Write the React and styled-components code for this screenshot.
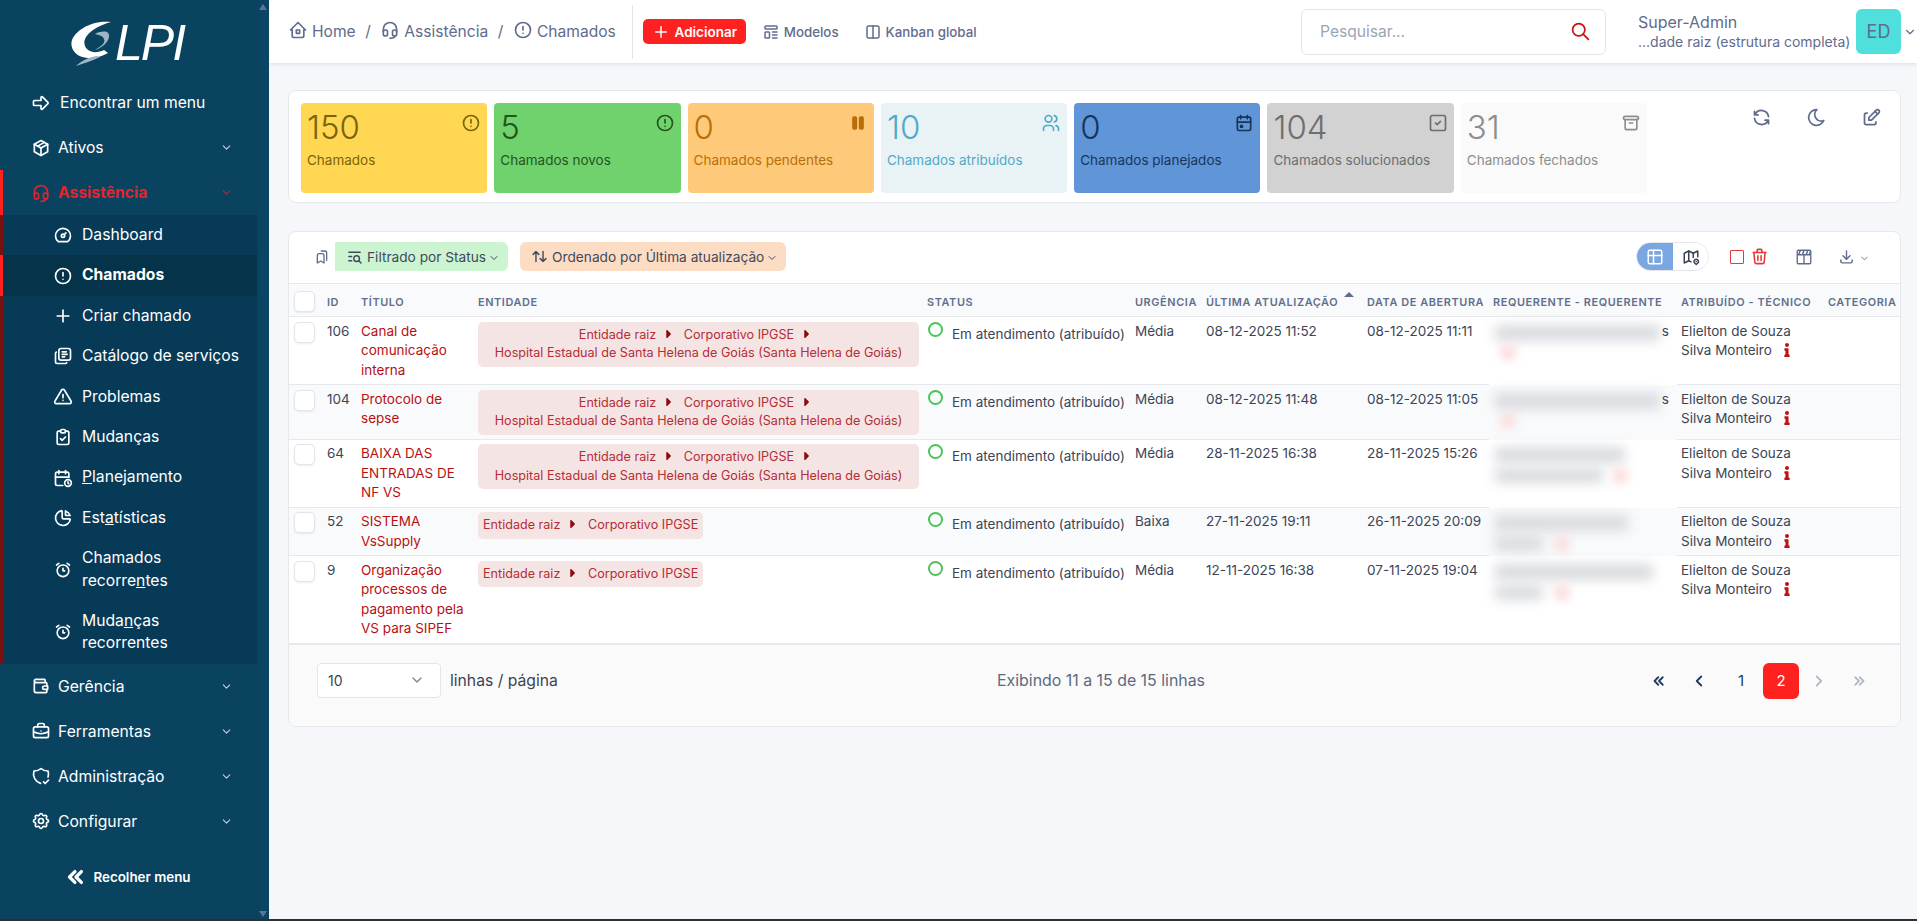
import React from "react"
import styled, { createGlobalStyle } from "styled-components"
import {
  TbAlarm, TbAlertCircle, TbAlertTriangle, TbArchive, TbArrowBigRight, TbArrowsSort, TbBookmarks, TbBriefcase,
  TbCalendarEvent, TbCalendarTime, TbChartPie, TbChevronDown, TbChevronLeft, TbChevronRight, TbChevronsLeft,
  TbChevronsRight, TbClipboardCheck, TbDashboard, TbDownload, TbEdit, TbHeadset, TbHome2, TbLayoutColumns,
  TbLibrary, TbListSearch, TbMap2, TbMoon, TbPackage, TbPlayerPauseFilled, TbPlus, TbRefresh, TbSearch,
  TbSettings, TbShieldCheck, TbSquareCheck, TbTable, TbTemplate, TbTrash, TbUsers, TbWallet,
  TbCaretRightFilled,
} from "react-icons/tb"
import { FaInfo } from "react-icons/fa"

const GlobalStyle = createGlobalStyle`
  html, body { margin: 0; padding: 0; height: 100%; overflow: hidden; }
  body { font-family: Inter, "Liberation Sans", sans-serif; font-size: 14px; color: #3a4356; background: #f5f7fb; }
  * { box-sizing: border-box; }
`

const Page = styled.div`
  display: flex;
  height: 919px;
`
const Sidebar = styled.aside`
  width: 269px;
  flex-shrink: 0;
  height: 919px;
  background: #0a4360;
  color: #fff;
  display: flex;
`
const SideInner = styled.div`
  width: 259px;
  display: flex;
  flex-direction: column;
`
const ScrollTrack = styled.div`
  width: 10px;
  background: #0b4565;
  position: relative;
  &::before, &::after {
    content: "";
    position: absolute;
    left: 0;
    border-left: 4px solid transparent;
    border-right: 4px solid transparent;
  }
  &::before { top: 4px; border-bottom: 6px solid #5b7693; }
  &::after { bottom: 2px; border-top: 6px solid #5b7693; }
`
const LogoWrap = styled.div`
  height: 80px;
  padding: 21px 0 0 71px;
`
const LogoBox = styled.div`
  display: flex;
  align-items: flex-start;
`
const LogoText = styled.span`
  font-family: "Liberation Sans", sans-serif;
  font-style: italic;
  font-size: 50px;
  line-height: 44px;
  letter-spacing: -2px;
  color: #fff;
  margin-left: -6px;
`
const NavItem = styled.div`
  height: 45px;
  display: flex;
  align-items: center;
  padding-left: ${p => (p.$active ? 28 : 31)}px;
  font-size: 15.7px;
  color: ${p => (p.$active ? "#e3232e" : "#fff")};
  font-weight: ${p => (p.$active ? 700 : 400)};
  border-left: ${p => (p.$active ? "3px solid #ff2020" : "0")};
  svg.main { font-size: 20px; flex-shrink: 0; margin-right: ${p => p.$gap || 7}px; }
`
const NavChevron = styled(TbChevronDown)`
  margin-left: auto;
  margin-right: 26px;
  font-size: 13px;
  opacity: .75;
`
const SubNav = styled.div`
  width: 257px;
  background: #063a57;
  border-left: 3px solid #7a1012;
`
const SubItem = styled.div`
  display: flex;
  align-items: center;
  padding: 9px 10px 9px 50px;
  line-height: 22.4px;
  font-size: 15.7px;
  margin-left: -3px;
  border-left: 3px solid ${p => (p.$active ? "#ff2020" : "transparent")};
  background: ${p => (p.$active ? "#053349" : "transparent")};
  font-weight: ${p => (p.$active ? 700 : 400)};
  svg { font-size: 20px; flex-shrink: 0; margin-right: 9px; }
`
const Collapse = styled.div`
  margin-top: auto;
  margin-bottom: 29px;
  padding-right: 5px;
  display: flex;
  align-items: center;
  justify-content: center;
  font-size: 13.4px;
  font-weight: 600;
  svg { font-size: 26px; margin-right: 4px; stroke-width: 3; }
`

const Main = styled.main`
  flex: 1;
  min-width: 0;
  display: flex;
  flex-direction: column;
`
const TopBar = styled.header`
  height: 63px;
  background: #fff;
  box-shadow: 0 1px 4px rgba(30, 40, 70, .12);
  display: flex;
  align-items: center;
  padding-left: 19px;
  color: #5f6c8c;
`
const Crumbs = styled.nav`
  display: flex;
  align-items: center;
  font-size: 15.6px;
  height: 54px;
  padding-right: 16px;
  border-right: 1px solid #e3e5ea;
`
const Crumb = styled.span`
  display: inline-flex;
  align-items: center;
  gap: 4px;
  svg { font-size: 20px; margin-top: -4px; }
`
const Slash = styled.span`
  margin: 0 9.5px;
`
const AddButton = styled.button`
  margin-left: 10px;
  height: 25px;
  width: 103px;
  border: 0;
  border-radius: 5px;
  background: #ff2020;
  color: #fff;
  font: 600 13.5px Inter, sans-serif;
  display: inline-flex;
  align-items: center;
  justify-content: center;
  gap: 5px;
  svg { font-size: 18px; }
`
const BarLink = styled.span`
  display: inline-flex;
  align-items: center;
  gap: 4px;
  margin-left: ${p => p.$ml}px;
  font-size: 13.3px;
  font-weight: 500;
  svg { font-size: 18px; }
`
const SearchBox = styled.div`
  margin-left: auto;
  width: 305px;
  height: 46px;
  border: 1px solid #e3e5ea;
  border-radius: 6px;
  display: flex;
  align-items: center;
  justify-content: space-between;
  padding: 0 14px 0 18px;
  font-size: 15.6px;
  color: #9aa5b8;
  svg { font-size: 21px; color: #c81414; }
`
const UserInfo = styled.div`
  margin-left: 32px;
  width: 218px;
  display: flex;
  flex-direction: column;
  gap: 1px;
`
const UserName = styled.span`
  font-size: 16px;
  line-height: 20px;
`
const UserEntity = styled.span`
  font-size: 14px;
  line-height: 18px;
  white-space: nowrap;
`
const Avatar = styled.div`
  width: 45px;
  height: 45px;
  border-radius: 6px;
  background: #4fdfdc;
  display: flex;
  align-items: center;
  justify-content: center;
  font-size: 18px;
`
const AvatarChevron = styled(TbChevronDown)`
  font-size: 14px;
  margin-left: 2px;
`

const Content = styled.div`
  padding: 27px 16px 0 19px;
  display: flex;
  flex-direction: column;
  gap: 28px;
`
const Card = styled.section`
  background: #fff;
  border: 1px solid #e6e8ec;
  border-radius: 8px;
`
const StatsCard = styled(Card)`
  height: 113px;
  padding: 12px;
  display: flex;
  justify-content: space-between;
`
const Tiles = styled.div`
  display: flex;
  gap: 7px;
`
const Tile = styled.div`
  width: 186.3px;
  height: 90px;
  border-radius: 4px;
  padding: 4px 6px 0;
  background: ${p => p.$bg};
  color: ${p => p.$fg};
`
const TileTop = styled.div`
  display: flex;
  justify-content: space-between;
  svg { font-size: 20px; margin-top: 6px; }
`
const TileNumber = styled.div`
  font-size: 33px;
  line-height: 40px;
  font-weight: 300;
`
const TileLabel = styled.div`
  margin-top: 3px;
  font-size: 13.5px;
  line-height: 20px;
`
const Tools = styled.div`
  display: flex;
  gap: 34px;
  padding: 4px 6px 0 0;
  color: #5f6c8c;
  svg { font-size: 21px; display: block; }
`

const TableCard = styled(Card)`
  height: 496px;
  display: flex;
  flex-direction: column;
  overflow: hidden;
`
const Toolbar = styled.div`
  height: 51px;
  flex-shrink: 0;
  display: flex;
  align-items: center;
  padding: 0 30px 2px 25px;
  color: #5f6c8c;
`
const BookmarkIcon = styled(TbBookmarks)`
  font-size: 16px;
  margin-right: 5px;
`
const Chip = styled.span`
  height: 29px;
  display: inline-flex;
  align-items: center;
  gap: 4px;
  padding: 0 8px 0 11px;
  background: ${p => p.$bg};
  border-radius: ${p => p.$radius};
  margin-right: 12px;
  color: #3f4a5c;
  font-size: 13.7px;
  svg { font-size: 17px; }
  svg.small { font-size: 12px; margin-left: -2px; margin-top: 2px; }
`
const ToolbarRight = styled.div`
  margin-left: auto;
  display: flex;
  align-items: center;
`
const ViewToggle = styled.div`
  display: flex;
  width: 73px;
  height: 29px;
  border: 1px solid #e3e5ea;
  border-radius: 15px;
  overflow: hidden;
`
const ViewButton = styled.span`
  flex: ${p => (p.$on ? "0 0 36px" : 1)};
  display: flex;
  align-items: center;
  justify-content: center;
  background: ${p => (p.$on ? "#7aa7e0" : "#fff")};
  color: ${p => (p.$on ? "#fff" : "#3a4356")};
  svg { font-size: 18px; }
`
const DeleteGroup = styled.div`
  display: flex;
  align-items: center;
  gap: 6px;
  margin-left: 21px;
  color: #e23a3a;
  svg { font-size: 19px; }
`
const RedSquare = styled.span`
  width: 14px;
  height: 14px;
  border: 1.5px solid #e23a3a;
  border-radius: 1px;
`
const ColumnsIcon = styled.svg`
  width: 18px;
  height: 18px;
  margin-left: 26px;
  fill: none;
  stroke: currentColor;
  stroke-width: 1.8;
`
const ExportMenu = styled.span`
  display: inline-flex;
  align-items: center;
  gap: 4px;
  margin-left: 25px;
  svg { font-size: 17px; }
  svg + svg { font-size: 11px; margin-top: 3px; }
`

const Table = styled.table`
  width: 100%;
  border-collapse: separate;
  border-spacing: 0;
  table-layout: fixed;
  flex-shrink: 0;
`
const Th = styled.th`
  width: ${p => p.$w}px;
  height: 34px;
  padding: 3px 4px 0;
  text-align: left;
  text-transform: uppercase;
  font-size: 10.9px;
  font-weight: 600;
  letter-spacing: .6px;
  color: #626f8c;
  white-space: nowrap;
  background: #f8fafc;
  border-top: 1px solid #e6e8ec;
  border-bottom: 1px solid #e6e8ec;
  position: relative;
`
const SortMark = styled.span`
  position: absolute;
  top: 8px;
  right: 9px;
  border-left: 5px solid transparent;
  border-right: 5px solid transparent;
  border-bottom: 5px solid #5f6c8c;
`
const Tr = styled.tr`
  background: ${p => (p.$alt ? "#f8fafc" : "#fff")};
`
const Td = styled.td`
  padding: 4.5px 4px 4px;
  vertical-align: top;
  line-height: 19.5px;
  font-size: 13.5px;
  border-bottom: ${p => (p.$last ? "2px" : "1px")} solid #e6e8ec;
  color: #3c4456;
  white-space: ${p => (p.$nowrap ? "nowrap" : "normal")};
`
const BlurCell = styled(Td)`
  position: relative;
  padding-left: 6px;
  border-bottom-color: ${p => (p.$last ? "#e6e8ec" : "transparent")};
`
const Check = styled.span`
  display: block;
  width: 21px;
  height: 21px;
  border: 1px solid #e3e5ea;
  border-radius: 5px;
  background: #fff;
  box-shadow: 0 1px 2px rgba(30, 40, 70, .08);
  margin-left: 1px;
`
const TicketLink = styled.span`
  color: #b81010;
`
const Entity = styled.span`
  display: ${p => (p.$wide ? "block" : "inline-block")};
  text-align: center;
  background: #f5e4e4;
  border-radius: 5px;
  padding: 4px 5px;
  font-size: 12.6px;
  line-height: 18.5px;
  color: #b52d35;
`
const Crumbname = styled.span`
  white-space: nowrap;
`
const Caret = styled(TbCaretRightFilled)`
  color: #8d0b0b;
  font-size: 14px;
  margin: 0 5px;
  vertical-align: -2px;
`
const StatusDot = styled.span`
  display: inline-block;
  width: 15px;
  height: 15px;
  border: 2px solid #4fc25a;
  border-radius: 50%;
  margin: 0 9px 0 1px;
  vertical-align: 2px;
`
const BlurLine = styled.div`
  height: ${p => p.$h || 16}px;
  width: ${p => p.$w}px;
  margin-top: ${p => p.$mt || 0}px;
  background: #d9dbdf;
  filter: blur(6px);
`
const BlurRed = styled.div`
  width: 14px;
  height: 15px;
  margin: ${p => p.$m};
  background: #fbdcdc;
  filter: blur(5px);
`
const CutLetter = styled.span`
  position: absolute;
  top: 5px;
  right: 8px;
`
const InfoIcon = styled(FaInfo)`
  color: #c01010;
  font-size: 14px;
  margin-left: 8px;
  vertical-align: -2px;
`

const Footer = styled.div`
  flex: 1;
  background: #fafafb;
  display: flex;
  align-items: flex-start;
  padding: 18px 21px 0 28px;
  position: relative;
`
const PageSize = styled.div`
  width: 124px;
  height: 35px;
  background: #fff;
  border: 1px solid #e3e5ea;
  border-radius: 4px;
  display: flex;
  align-items: center;
  justify-content: space-between;
  padding: 0 15px 0 10px;
  svg { font-size: 16px; color: #7a8499; }
`
const PageSizeLabel = styled.span`
  margin-left: 9px;
  line-height: 35px;
  font-size: 15.7px;
`
const ShowingText = styled.span`
  position: absolute;
  left: 708px;
  top: 18px;
  line-height: 35px;
  font-size: 15.9px;
  color: #5d6a80;
`
const Pager = styled.div`
  margin-left: auto;
  display: flex;
  align-items: center;
`
const PageBtn = styled.span`
  width: ${p => p.$w || 40}px;
  height: 36px;
  display: flex;
  align-items: center;
  justify-content: center;
  border-radius: 6px;
  font-size: 15px;
  background: ${p => (p.$on ? "#ff2020" : "transparent")};
  color: ${p => (p.$on ? "#fff" : p.$off ? "#b3bac6" : "#1f3a5c")};
  svg { font-size: 18px; stroke-width: 2.4; }
`
const BottomLine = styled.div`
  height: 2px;
  background: #2c3033;
`

const menuSub = [
  { icon: TbDashboard, label: "Dashboard" },
  { icon: TbAlertCircle, label: "Chamados", active: true },
  { icon: TbPlus, label: "Criar chamado" },
  { icon: TbLibrary, label: "Catálogo de serviços" },
  { icon: TbAlertTriangle, label: "Problemas" },
  { icon: TbClipboardCheck, label: "Mudanças" },
  { icon: TbCalendarTime, label: <><u>P</u>lanejamento</> },
  { icon: TbChartPie, label: <>Est<u>a</u>tísticas</> },
  { icon: TbAlarm, label: <>Chamados<br />recorre<u>n</u>tes</> },
  { icon: TbAlarm, label: <>Muda<u>n</u>ças<br />recorrentes</> },
]
const menuBottom = [
  { icon: TbWallet, label: "Gerência" },
  { icon: TbBriefcase, label: "Ferramentas" },
  { icon: TbShieldCheck, label: "Administração" },
  { icon: TbSettings, label: "Configurar" },
]

const tiles = [
  { n: 150, label: "Chamados", icon: TbAlertCircle, bg: "#ffd753", fg: "#7a6408" },
  { n: 5, label: "Chamados novos", icon: TbAlertCircle, bg: "#6fd26d", fg: "#26541f" },
  { n: 0, label: "Chamados pendentes", icon: TbPlayerPauseFilled, bg: "#ffc97a", fg: "#b96f08" },
  { n: 10, label: "Chamados atribuídos", icon: TbUsers, bg: "#e9f3f6", fg: "#52a9c7" },
  { n: 0, label: "Chamados planejados", icon: TbCalendarEvent, bg: "#6095d8", fg: "#17355c" },
  { n: 104, label: "Chamados solucionados", icon: TbSquareCheck, bg: "#d2d2d2", fg: "#6e6e6e" },
  { n: 31, label: "Chamados fechados", icon: TbArchive, bg: "#fafafa", fg: "#8d8d8d" },
]

const columns = [
  ["", 34], ["ID", 34], ["Título", 117], ["Entidade", 449], ["Status", 208], ["Urgência", 71],
  ["Última atualização", 161], ["Data de abertura", 126], ["Requerente - Requerente", 188],
  ["Atribuído - Técnico", 147], ["Categoria", 76],
]

const tickets = [
  { id: 106, title: "Canal de comunicação interna", wide: true, urg: "Média", upd: "08-12-2025 11:52", open: "08-12-2025 11:11", blur: [165, 0], red: "4px 0 0 6px", cut: true },
  { id: 104, title: "Protocolo de sepse", wide: true, urg: "Média", upd: "08-12-2025 11:48", open: "08-12-2025 11:05", blur: [165, 0], red: "4px 0 0 6px", cut: true },
  { id: 64, title: "BAIXA DAS ENTRADAS DE NF VS", wide: true, urg: "Média", upd: "28-11-2025 16:38", open: "28-11-2025 15:26", blur: [130, 108], red: "-15px 0 0 118px" },
  { id: 52, title: "SISTEMA VsSupply", urg: "Baixa", upd: "27-11-2025 19:11", open: "26-11-2025 20:09", blur: [133, 48], red: "-15px 0 0 60px" },
  { id: 9, title: "Organização processos de pagamento pela VS para SIPEF", urg: "Média", upd: "12-11-2025 16:38", open: "07-11-2025 19:04", blur: [158, 48], red: "-15px 0 0 60px" },
]

function Logo() {
  return (
    <LogoBox>
      <svg width="50" height="50" viewBox="0 0 50 50">
        <path d="M40 1C24 -1 6 7 1 19c-3 9 5 18 16 18 8 0 15-2 20-5l-4-3c-6 3-13 3-17-1C10 22 13 9 40 1z" fill="#fff" />
        <path d="M24 13c8-4 15-3 14 3-1 7-10 12-14 13 5-3 11-7 9-11-1-3-5-4-9-5z" fill="#9fb4c4" />
        <path d="M26 35C18 36 10 40 5 45c8-3 16-5 24-9z" fill="#9fb4c4" />
      </svg>
      <LogoText>LPI</LogoText>
    </LogoBox>
  )
}

function ColumnsGlyph() {
  return (
    <ColumnsIcon viewBox="0 0 24 24">
      <rect x="3" y="3" width="18" height="18" rx="1.5" />
      <path d="M3 9h18M12 9v12M7 3.5 5 8.5M12 3.5l-2 5M17 3.5l-2 5M21 4l-2 4.5" />
    </ColumnsIcon>
  )
}

function Row({ t, alt, last }) {
  return (
    <Tr $alt={alt}>
      <Td $last={last}><Check /></Td>
      <Td $last={last}>{t.id}</Td>
      <Td $last={last}><TicketLink>{t.title}</TicketLink></Td>
      <Td $last={last}>
        <Entity $wide={t.wide}>
          <Crumbname>Entidade raiz<Caret /></Crumbname> <Crumbname>Corporativo IPGSE{t.wide && <Caret />}</Crumbname>
          {t.wide && <> <Crumbname>Hospital Estadual de Santa Helena de Goiás (Santa Helena de Goiás)</Crumbname></>}
        </Entity>
      </Td>
      <Td $last={last} $nowrap><StatusDot />Em atendimento (atribuído)</Td>
      <Td $last={last}>{t.urg}</Td>
      <Td $last={last} $nowrap>{t.upd}</Td>
      <Td $last={last} $nowrap>{t.open}</Td>
      <BlurCell $last={last}>
        <BlurLine $w={t.blur[0]} $mt={3} />
        {t.blur[1] > 0 && <BlurLine $w={t.blur[1]} $mt={5} $h={15} />}
        <BlurRed $m={t.red} />
        {t.cut && <CutLetter>s</CutLetter>}
      </BlurCell>
      <Td $last={last}>Elielton de Souza<br />Silva Monteiro<InfoIcon /></Td>
      <Td $last={last} />
    </Tr>
  )
}

export default function App() {
  return (
    <>
      <GlobalStyle />
      <Page>
        <Sidebar>
          <SideInner>
            <LogoWrap><Logo /></LogoWrap>
            <NavItem $gap={9}><TbArrowBigRight className="main" />Encontrar um menu</NavItem>
            <NavItem><TbPackage className="main" />Ativos<NavChevron /></NavItem>
            <NavItem $active><TbHeadset className="main" />Assistência<NavChevron /></NavItem>
            <SubNav>
              {menuSub.map((m, i) => (
                <SubItem key={i} $active={m.active}><m.icon /><span>{m.label}</span></SubItem>
              ))}
            </SubNav>
            {menuBottom.map(m => (
              <NavItem key={m.label}><m.icon className="main" />{m.label}<NavChevron /></NavItem>
            ))}
            <Collapse><TbChevronsLeft />Recolher menu</Collapse>
          </SideInner>
          <ScrollTrack />
        </Sidebar>
        <Main>
          <TopBar>
            <Crumbs>
              <Crumb><TbHome2 />Home</Crumb>
              <Slash>/</Slash>
              <Crumb><TbHeadset />Assistência</Crumb>
              <Slash>/</Slash>
              <Crumb><TbAlertCircle />Chamados</Crumb>
            </Crumbs>
            <AddButton><TbPlus />Adicionar</AddButton>
            <BarLink $ml={16}><TbTemplate />Modelos</BarLink>
            <BarLink $ml={25}><TbLayoutColumns />Kanban global</BarLink>
            <SearchBox>Pesquisar...<TbSearch /></SearchBox>
            <UserInfo>
              <UserName>Super-Admin</UserName>
              <UserEntity>...dade raiz (estrutura completa)</UserEntity>
            </UserInfo>
            <Avatar>ED</Avatar>
            <AvatarChevron />
          </TopBar>
          <Content>
            <StatsCard>
              <Tiles>
                {tiles.map(t => (
                  <Tile key={t.label} $bg={t.bg} $fg={t.fg}>
                    <TileTop><TileNumber>{t.n}</TileNumber><t.icon /></TileTop>
                    <TileLabel>{t.label}</TileLabel>
                  </Tile>
                ))}
              </Tiles>
              <Tools><TbRefresh /><TbMoon /><TbEdit /></Tools>
            </StatsCard>
            <TableCard>
              <Toolbar>
                <BookmarkIcon />
                <Chip $bg="#ccf4d1" $radius="0 6px 6px 0"><TbListSearch />Filtrado por Status<TbChevronDown className="small" /></Chip>
                <Chip $bg="#fddcc4" $radius="6px"><TbArrowsSort />Ordenado por Última atualização<TbChevronDown className="small" /></Chip>
                <ToolbarRight>
                  <ViewToggle>
                    <ViewButton $on><TbTable /></ViewButton>
                    <ViewButton><TbMap2 /></ViewButton>
                  </ViewToggle>
                  <DeleteGroup><RedSquare /><TbTrash /></DeleteGroup>
                  <ColumnsGlyph />
                  <ExportMenu><TbDownload /><TbChevronDown /></ExportMenu>
                </ToolbarRight>
              </Toolbar>
              <Table>
                <thead>
                  <tr>
                    {columns.map(([name, w], i) => (
                      <Th key={i} $w={w}>{i === 0 ? <Check /> : name}{name === "Última atualização" && <SortMark />}</Th>
                    ))}
                  </tr>
                </thead>
                <tbody>
                  {tickets.map((t, i) => <Row key={t.id} t={t} alt={i % 2 === 1} last={i === tickets.length - 1} />)}
                </tbody>
              </Table>
              <Footer>
                <PageSize>10<TbChevronDown /></PageSize>
                <PageSizeLabel>linhas / página</PageSizeLabel>
                <ShowingText>Exibindo 11 a 15 de 15 linhas</ShowingText>
                <Pager>
                  <PageBtn><TbChevronsLeft /></PageBtn>
                  <PageBtn><TbChevronLeft /></PageBtn>
                  <PageBtn $w={44}>1</PageBtn>
                  <PageBtn $on $w={36}>2</PageBtn>
                  <PageBtn $off><TbChevronRight /></PageBtn>
                  <PageBtn $off><TbChevronsRight /></PageBtn>
                </Pager>
              </Footer>
            </TableCard>
          </Content>
        </Main>
      </Page>
      <BottomLine />
    </>
  )
}
